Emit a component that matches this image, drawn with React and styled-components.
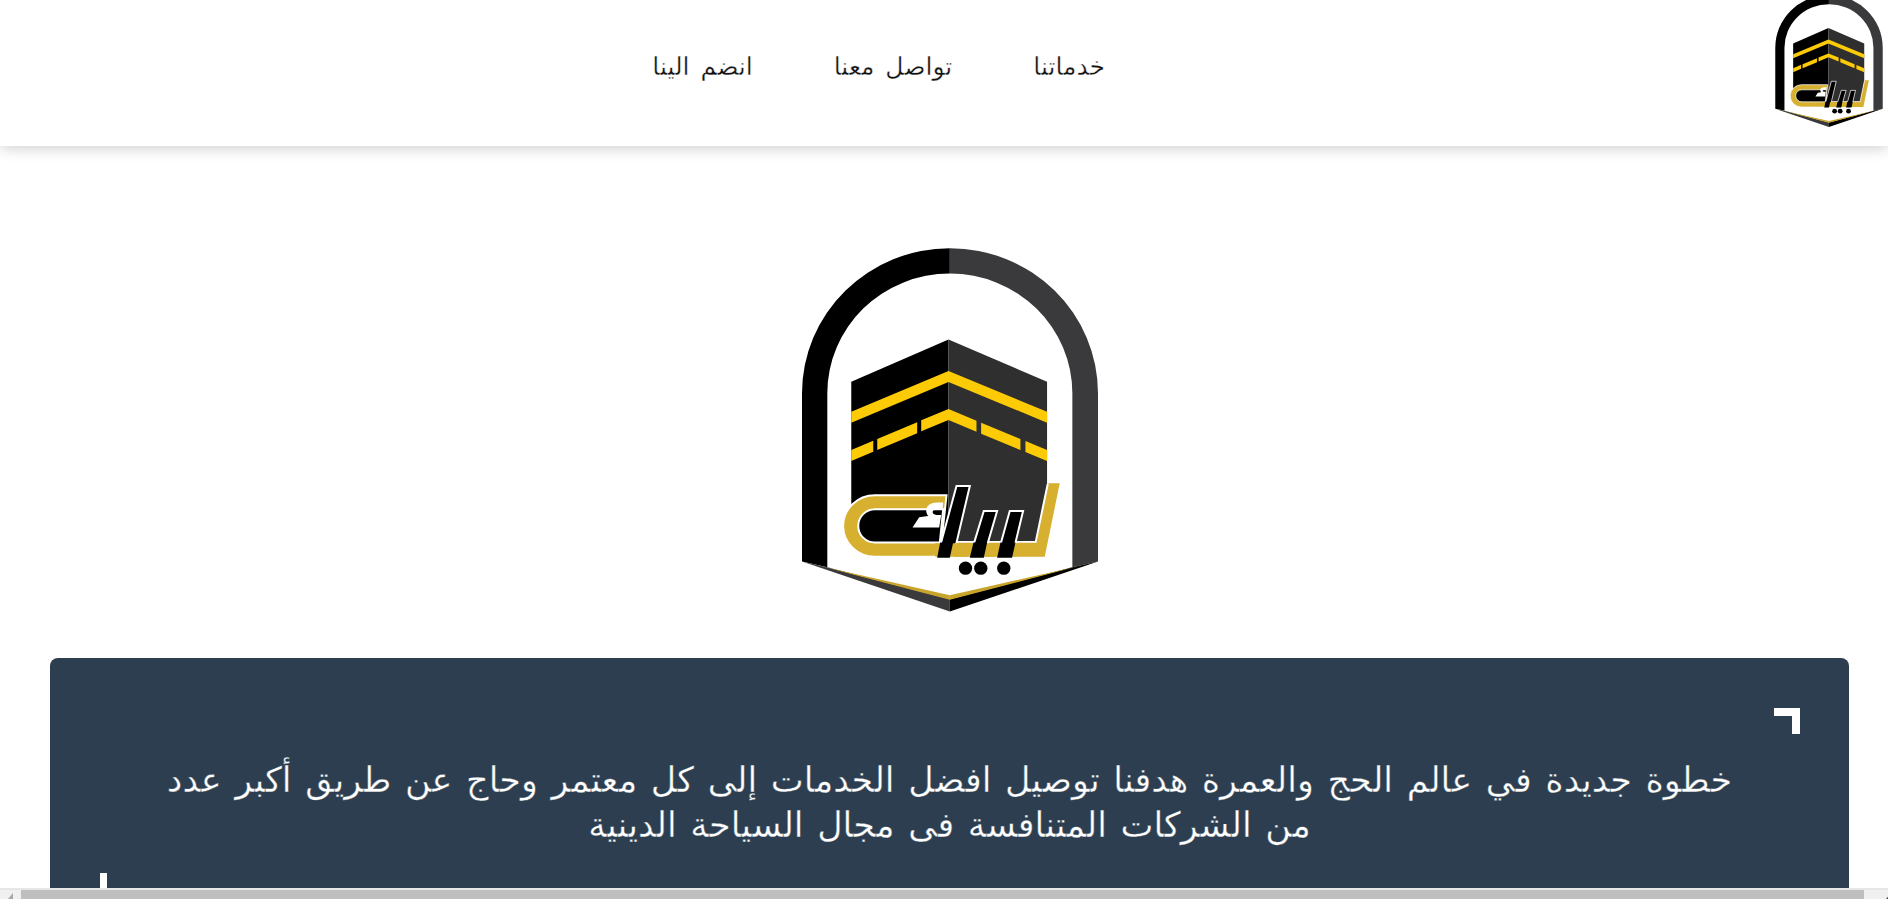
import React from "react";
import styled, { createGlobalStyle } from "styled-components";

const GlobalStyle = createGlobalStyle`
  html, body {
    margin: 0;
    padding: 0;
    height: 100%;
    overflow: hidden;
    background: #fff;
    font-family: "DejaVu Sans", sans-serif;
  }
`;

const Page = styled.div`
  height: 899px;
  overflow: hidden;
  direction: rtl;
`;

const Header = styled.header`
  height: 146px;
  display: flex;
  align-items: flex-start;
  background: #fff;
  box-shadow: 0 2px 14px rgba(0, 0, 0, 0.2);
`;

const HeaderLogo = styled.svg`
  width: 108px;
  height: 132px;
  margin: -5px 5px 0 0;
  flex: none;
`;

const Nav = styled.nav`
  display: flex;
  gap: 81px;
  margin-right: 670px;
  padding-top: 52px;
`;

const NavLink = styled.a`
  font-size: 25px;
  line-height: 30px;
  word-spacing: 3px;
  color: #111;
  -webkit-text-stroke: 0.35px #fff;
`;

const Hero = styled.div`
  display: flex;
  justify-content: center;
  padding: 102px 0 0 12px;
`;

const HeroLogo = styled.svg`
  width: 296px;
  height: 364px;
`;

const Card = styled.section`
  margin: 46px 39px 0 50px;
  height: 500px;
  box-sizing: border-box;
  background: #2c3e50;
  border-radius: 8px;
  padding: 100px 100px 0;
  color: #fff;
  text-align: center;
  position: relative;
`;

const Quote = styled.p`
  margin: 0;
  font-size: 35px;
  line-height: 45px;
  word-spacing: 2.5px;
  -webkit-text-stroke: 0.35px #2c3e50;
`;

const CornerTop = styled.span`
  position: absolute;
  top: 50px;
  right: 49px;
  width: 26px;
  height: 26px;
  box-sizing: border-box;
  border-top: 8px solid #fff;
  border-right: 8px solid #fff;
`;

const CornerBottom = styled.span`
  position: absolute;
  top: 215px;
  left: 50px;
  width: 26px;
  height: 26px;
  box-sizing: border-box;
  border-bottom: 8px solid #fff;
  border-left: 7px solid #fff;
`;

const Scrollbar = styled.div`
  position: fixed;
  left: 0;
  right: 0;
  bottom: 0;
  height: 9px;
  padding-top: 2px;
  background: #f0f0f0;
  direction: ltr;
  display: flex;
  &::before {
    content: "";
    position: absolute;
    top: 0;
    left: 0;
    right: 0;
    height: 2px;
    background: #e6e6e6;
  }
`;

const ScrollEnd = styled.div`
  flex: none;
  width: ${(p) => p.$width}px;
  position: relative;
`;

const ScrollArrow = styled.span`
  position: absolute;
  bottom: 0;
  width: 5px;
  height: 6px;
  background: ${(p) => p.$color};
  clip-path: polygon(100% 0, 100% 100%, 0 100%);
  ${(p) => (p.$flip ? "right: -3px;" : "left: 8px;")}
`;

const Thumb = styled.div`
  flex: 1;
  background: #bfbfbf;
`;

// same mark in the header and in the hero, coordinates taken off the big one
function LogoMark() {
  return (
    <>
      <path d="M66 995V490A444 436 0 0 1 510 54V130A368 360 0 0 0 142 490V1012Z" fill="#000" />
      <path d="M955 995V490A444 436 0 0 0 510 54V130A368 360 0 0 1 878 490V1012Z" fill="#3a3a3c" />
      <path d="M66 995L510 1145V1108L142 1012Z" fill="#3a3a3c" />
      <path d="M955 995L510 1145V1108L878 1012Z" fill="#000" />
      <path d="M100 1004L510 1096V1110L142 1014Z" fill="#c9a42a" />
      <path d="M920 1004L510 1096V1110L878 1014Z" fill="#c9a42a" />

      <path d="M214 455L506 328V900H214Z" fill="#000" />
      <path d="M506 328L802 455V770L770 938H506Z" fill="#2f2f2f" />

      <path d="M214 545L506 423L802 545V578L506 456L214 578Z" fill="#fccb06" />
      <path d="M214 660L280 632V665L214 693Z" fill="#fccb06" />
      <path d="M292 627L412 577V610L292 660Z" fill="#fccb06" />
      <path d="M424 571L506 537L590 572V605L506 570L424 604Z" fill="#fccb06" />
      <path d="M604 578L722 627V660L604 611Z" fill="#fccb06" />
      <path d="M737 633L802 660V693L737 666Z" fill="#fccb06" />

      <path d="M285 796H500L480 981H285A95 92 0 0 1 285 796Z" fill="#d6b02e" stroke="#fff" strokeWidth="6" />
      <path d="M480 938H768L806 760H840L795 981H480Z" fill="#d6b02e" />
      <path d="M528 936H768L804 762" fill="none" stroke="#fff" strokeWidth="6" />
      <path d="M285 838H490L480 938H285A50 50 0 0 1 285 838Z" fill="#000" stroke="#fff" strokeWidth="6" />
      <path d="M398 893L418 862L445 858C432 840 440 820 470 818H490L488 838L462 840C455 845 458 855 470 855H484L478 893Z" fill="#fff" />
      <path d="M530 768H570L520 981H472Z" fill="#000" stroke="#fff" strokeWidth="6" />
      <path d="M612 843H652L612 981H570Z" fill="#000" stroke="#fff" strokeWidth="6" />
      <path d="M690 843H730L697 981H652Z" fill="#000" stroke="#fff" strokeWidth="6" />
      <path d="M466 940H710V981H466Z" fill="#d6b02e" />
      <path d="M481 938H520L510 984H472Z" fill="#000" />
      <path d="M581 938H622L612 984H570Z" fill="#000" />
      <path d="M662 938H707L697 984H652Z" fill="#000" />

      <circle cx="557" cy="1015" r="20" fill="#000" />
      <circle cx="603" cy="1015" r="20" fill="#000" />
      <circle cx="672" cy="1015" r="20" fill="#000" />
    </>
  );
}

export default function App() {
  return (
    <Page>
      <GlobalStyle />
      <Header>
        <HeaderLogo viewBox="66 54 889 1092"><LogoMark /></HeaderLogo>
        <Nav>
          <NavLink>خدماتنا</NavLink>
          <NavLink>تواصل معنا</NavLink>
          <NavLink>انضم الينا</NavLink>
        </Nav>
      </Header>
      <Hero>
        <HeroLogo viewBox="66 54 889 1092"><LogoMark /></HeroLogo>
      </Hero>
      <Card>
        <CornerTop />
        <Quote>خطوة جديدة في عالم الحج والعمرة هدفنا توصيل افضل الخدمات إلى كل معتمر وحاج عن طريق أكبر عدد من الشركات المتنافسة فى مجال السياحة الدينية</Quote>
        <CornerBottom />
      </Card>
      <Scrollbar>
        <ScrollEnd $width={21}><ScrollArrow $color="#a8a8a8" /></ScrollEnd>
        <Thumb />
        <ScrollEnd $width={24}><ScrollArrow $flip $color="#505050" /></ScrollEnd>
      </Scrollbar>
    </Page>
  );
}
